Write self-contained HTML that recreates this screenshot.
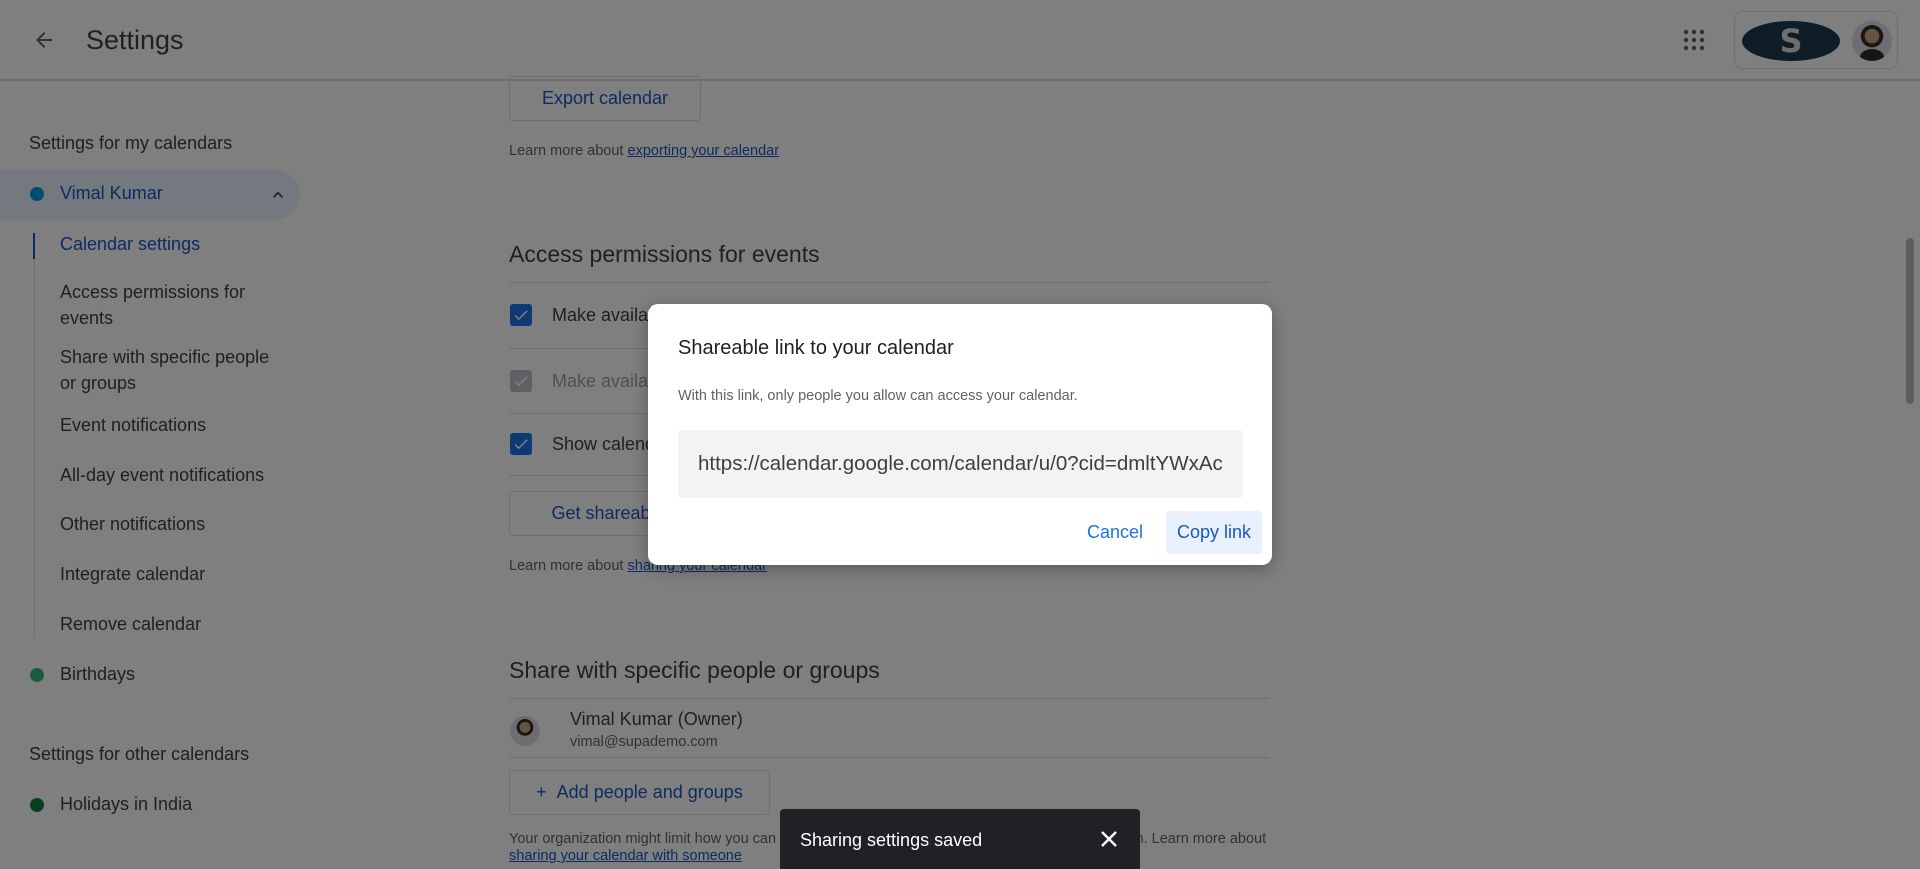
<!DOCTYPE html>
<html><head><meta charset="utf-8"><style>
*{box-sizing:border-box;margin:0;padding:0}
body{width:1920px;height:869px;overflow:hidden;position:relative;background:#fff;font-family:"Liberation Sans",Arial,sans-serif;color:#3c4043}
.a{position:absolute;white-space:nowrap}
.hdr{position:absolute;left:0;top:0;width:1920px;height:81px;border-bottom:2px solid #dadce0;background:#fff}
.side{font-size:18px;color:#3c4043}
.blue{color:#1a57c0}
.btn{position:absolute;border:1px solid #dadce0;border-radius:4px;color:#1a57c0;font-size:18px;display:flex;align-items:center;justify-content:center}
.sm{font-size:14.5px;color:#5f6368}
.sm u{color:#1a57c0}
.line{position:absolute;left:509px;width:760px;height:1px;background:#dadce0}
.cb{position:absolute;left:510px;width:22px;height:22px;border-radius:3px;background:#1a73e8}
.cb svg{position:absolute;left:2px;top:2px}
.h2{font-size:23px;color:#3c4043}
.ov{position:absolute;left:0;top:0;width:1920px;height:869px;background:rgba(0,0,0,0.5)}
.dlg{position:absolute;left:648px;top:304px;width:624px;height:261px;background:#fff;border-radius:10px;box-shadow:0 4px 16px rgba(0,0,0,.3)}
</style></head><body>
<div class="hdr"></div>
<svg class="a" style="left:32px;top:28px" width="24" height="24" viewBox="0 0 24 24"><path d="M20 11H7.8l5.6-5.6L12 4l-8 8 8 8 1.4-1.4L7.8 13H20z" fill="#5f6368"/></svg>
<div class="a" style="left:86px;top:25px;font-size:27px;color:#3c4043">Settings</div>
<svg class="a" style="left:1682px;top:28px" width="24" height="24" viewBox="0 0 24 24" fill="#5f6368"><circle cx="4" cy="4" r="2.2"/><circle cx="12" cy="4" r="2.2"/><circle cx="20" cy="4" r="2.2"/><circle cx="4" cy="12" r="2.2"/><circle cx="12" cy="12" r="2.2"/><circle cx="20" cy="12" r="2.2"/><circle cx="4" cy="20" r="2.2"/><circle cx="12" cy="20" r="2.2"/><circle cx="20" cy="20" r="2.2"/></svg>
<div class="a" style="left:1734px;top:11px;width:164px;height:58px;border:1px solid #dadce0;border-radius:8px"></div>
<div class="a" style="left:1742px;top:21px;width:98px;height:40px;border-radius:50%;background:#1c3a4f;color:#ddd;font:bold 32px 'DejaVu Sans',sans-serif;text-align:center;line-height:40px">S</div>
<div class="a" style="left:1852px;top:21px;width:40px;height:40px;border-radius:50%;background:radial-gradient(circle at 50% 38%,#c9a88c 0 22%,#3a2a20 24% 34%,#d8dde2 36%);overflow:hidden"><div style="position:absolute;left:8px;top:28px;width:24px;height:16px;border-radius:50% 50% 0 0;background:#2b2b2b"></div></div>

<div class="a side" style="left:29px;top:133px">Settings for my calendars</div>
<div class="a" style="left:0;top:170px;width:300px;height:50px;border-radius:0 25px 25px 0;background:#e8f0fe"></div>
<div class="a" style="left:30px;top:187px;width:14px;height:14px;border-radius:50%;background:#039be5"></div>
<div class="a side blue" style="left:60px;top:183px">Vimal Kumar</div>
<svg class="a" style="left:268px;top:185px" width="20" height="20" viewBox="0 0 24 24"><path d="M7.4 15.4 12 10.8l4.6 4.6L18 14l-6-6-6 6z" fill="#3c4043"/></svg>
<div class="a" style="left:34px;top:233px;width:1px;height:404px;background:#dadce0"></div>
<div class="a" style="left:33px;top:233px;width:2px;height:26px;background:#1a57c0"></div>
<div class="a side blue" style="left:60px;top:234px">Calendar settings</div>
<div class="a side" style="left:60px;top:279px;line-height:26px">Access permissions for<br>events</div>
<div class="a side" style="left:60px;top:344px;line-height:26px">Share with specific people<br>or groups</div>
<div class="a side" style="left:60px;top:415px">Event notifications</div>
<div class="a side" style="left:60px;top:465px">All-day event notifications</div>
<div class="a side" style="left:60px;top:514px">Other notifications</div>
<div class="a side" style="left:60px;top:564px">Integrate calendar</div>
<div class="a side" style="left:60px;top:614px">Remove calendar</div>
<div class="a" style="left:30px;top:668px;width:14px;height:14px;border-radius:50%;background:#33b679"></div>
<div class="a side" style="left:60px;top:664px">Birthdays</div>
<div class="a side" style="left:29px;top:744px">Settings for other calendars</div>
<div class="a" style="left:30px;top:798px;width:14px;height:14px;border-radius:50%;background:#0b8043"></div>
<div class="a side" style="left:60px;top:794px">Holidays in India</div>

<div class="btn" style="left:509px;top:76px;width:192px;height:45px">Export calendar</div>
<div class="a sm" style="left:509px;top:143px">Learn more about <u>exporting your calendar</u></div>
<div class="a h2" style="left:509px;top:241px">Access permissions for events</div>
<div class="line" style="top:282px"></div>
<div class="cb" style="top:304px"><svg width="18" height="18" viewBox="0 0 24 24"><path d="M9 16.2 4.8 12l-1.4 1.4L9 19 21 7l-1.4-1.4z" fill="#fff"/></svg></div>
<div class="a side" style="left:552px;top:305px">Make available to public</div>
<div class="line" style="top:348px"></div>
<div class="cb" style="top:370px;background:#bdc1c6"><svg width="18" height="18" viewBox="0 0 24 24"><path d="M9 16.2 4.8 12l-1.4 1.4L9 19 21 7l-1.4-1.4z" fill="#fff"/></svg></div>
<div class="a side" style="left:552px;top:371px;color:#9aa0a6">Make available for</div>
<div class="line" style="top:413px"></div>
<div class="cb" style="top:433px"><svg width="18" height="18" viewBox="0 0 24 24"><path d="M9 16.2 4.8 12l-1.4 1.4L9 19 21 7l-1.4-1.4z" fill="#fff"/></svg></div>
<div class="a side" style="left:552px;top:434px">Show calendar</div>
<div class="line" style="top:475px"></div>
<div class="btn" style="left:509px;top:491px;width:230px;height:45px">Get shareable link</div>
<div class="a sm" style="left:509px;top:558px">Learn more about <u>sharing your calendar</u></div>
<div class="a h2" style="left:509px;top:657px">Share with specific people or groups</div>
<div class="line" style="top:698px"></div>
<div class="a" style="left:510px;top:716px;width:30px;height:30px;border-radius:50%;background:radial-gradient(circle at 50% 38%,#c9a88c 0 22%,#3a2a20 24% 34%,#d8dde2 36%)"></div>
<div class="a side" style="left:570px;top:709px">Vimal Kumar (Owner)</div>
<div class="a sm" style="left:570px;top:734px">vimal@supademo.com</div>
<div class="line" style="top:757px"></div>
<div class="btn" style="left:509px;top:770px;width:261px;height:45px">+&nbsp;&nbsp;Add people and groups</div>
<div class="a sm" style="left:509px;top:831px">Your organization might limit how you can share your calendar with people outside the organization. Learn more about</div>
<div class="a sm" style="left:509px;top:848px"><u>sharing your calendar with someone</u></div>
<div class="a" style="left:1906px;top:238px;width:8px;height:166px;border-radius:4px;background:#bdbdbd"></div>

<div class="ov"></div>
<div class="dlg">
<div class="a" style="left:30px;top:33px;font-size:20px;color:#202124">Shareable link to your calendar</div>
<div class="a" style="left:30px;top:84px;font-size:14.5px;color:#5f6368">With this link, only people you allow can access your calendar.</div>
<div class="a" style="left:30px;top:126px;width:565px;height:68px;background:#f1f3f4;border-radius:4px"></div>
<div class="a" style="left:50px;top:126px;width:524px;height:68px;overflow:hidden;font-size:20.5px;color:#3c4043;line-height:68px">https://calendar.google.com/calendar/u/0?cid=dmltYWxAc</div>
<div class="a" style="left:439px;top:218px;font-size:18px;color:#1a73e8">Cancel</div>
<div class="a" style="left:518px;top:207px;width:96px;height:43px;background:#e8f0fe;border-radius:4px;font-size:18px;color:#1a57c0;text-align:center;line-height:43px">Copy link</div>
</div>
<div class="a" style="left:780px;top:809px;width:360px;height:60px;background:#202124;border-radius:4px 4px 0 0"></div>
<div class="a" style="left:800px;top:830px;font-size:18px;color:#fff">Sharing settings saved</div>
<svg class="a" style="left:1097px;top:827px" width="24" height="24" viewBox="0 0 24 24"><path d="M5 5l14 14M19 5 5 19" stroke="#fff" stroke-width="2.4"/></svg>
</body></html>
